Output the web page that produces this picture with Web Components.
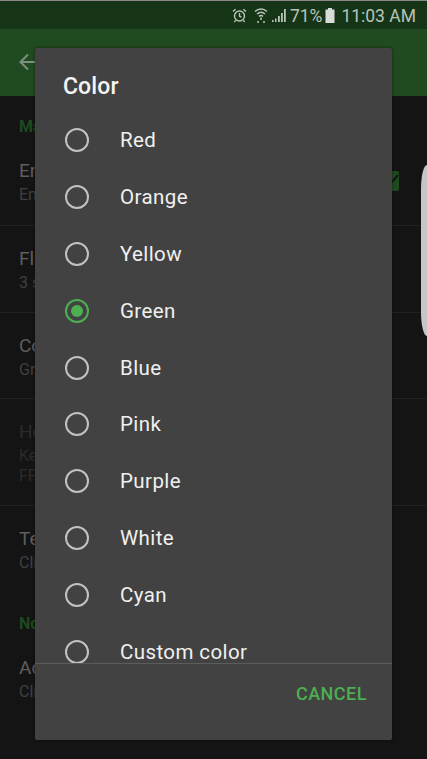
<!DOCTYPE html>
<html>
<head>
<meta charset="utf-8">
<style>
  html, body { margin: 0; height: 100%; background: #141414; }
  body { font-family: Roboto, sans-serif; overflow: hidden; position: relative; }
</style>
</head>
<body>
<settings-screen></settings-screen>
<edge-handle></edge-handle>
<color-dialog selected="Green"></color-dialog>

<script>
class StatusBar extends HTMLElement {
  constructor() {
    super();
    this.attachShadow({ mode: 'open' }).innerHTML = `
      <style>
        :host {
          display: flex;
          align-items: center;
          justify-content: flex-end;
          box-sizing: border-box;
          height: 29px;
          padding: 1px 11px 0 0;
          background: #163516;
          border-top: 1px solid #8a8a8a;
          color: #b9c4b9;
          font-size: 17.5px;
        }
        svg { display: block; flex: none; }
        .alarm { margin-right: 7px; }
        .wifi { margin-right: 3px; }
        .pct { margin: 0 3px 0 4px; }
        .time { margin-left: 6px; }
      </style>
      <svg class="alarm" width="15" height="15" viewBox="0 0 15 15" fill="none" stroke="#b9c4b9" stroke-width="1.4">
        <circle cx="7.5" cy="8" r="5"/><path d="M7.5 5v3.2l2 1M1 3.6 3.6 1.2M14 3.6 11.4 1.2M3.6 12.4 2.4 14M11.4 12.4 12.6 14"/>
      </svg>
      <svg class="wifi" width="14" height="17" viewBox="0 0 14 17" fill="none" stroke="#b9c4b9" stroke-width="1.5">
        <path d="M1 4.5C4.5 1.2 9.5 1.2 13 4.5M3 7C5.400 4.800 8.600 4.800 11 7M5 9.300C6.200 8.300 7.800 8.300 9 9.300"/>
        <path d="M7 10.500V13" /><circle cx="4" cy="15" r="1" fill="#b9c4b9" stroke="none"/><circle cx="10" cy="15" r="1" fill="#b9c4b9" stroke="none"/>
      </svg>
      <svg width="15" height="15" viewBox="0 0 15 15" fill="#b9c4b9">
        <path d="M1 12h1.500v2H1zM4 10.500h1.500V14H4zM7 8h1.800v6H7zM10 5h1.800v9H10zM13 1h1.800v13H13z"/>
      </svg>
      <span class="pct">71%</span>
      <svg width="10" height="15" viewBox="0 0 10 15" fill="#d8dcd8">
        <path d="M3 0h4v1.500h2.500V15H.5V1.500H3z"/>
      </svg>
      <span class="time">11:03 AM</span>`;
  }
}

class AppBar extends HTMLElement {
  constructor() {
    super();
    this.attachShadow({ mode: 'open' }).innerHTML = `
      <style>
        :host {
          display: flex;
          align-items: center;
          box-sizing: border-box;
          height: 67px;
          padding: 0 0 2px 19px;
          background: #204a20;
        }
        svg { display: block; }
      </style>
      <svg width="18" height="18" viewBox="0 0 18 18" fill="none" stroke="#7e8f7e" stroke-width="2">
        <path d="M18 9H2M9 1.500 1.500 9 9 16.500"/>
      </svg>`;
  }
}

class SectionLabel extends HTMLElement {
  constructor() {
    super();
    this.attachShadow({ mode: 'open' }).innerHTML = `
      <style>
        :host {
          display: block;
          padding: 21px 19px 1px;
          color: #1c4a1e;
          font-size: 16px;
          font-weight: 700;
          line-height: 20px;
        }
      </style>
      <slot></slot>`;
  }
}

class SettingRow extends HTMLElement {
  constructor() {
    super();
    this.attachShadow({ mode: 'open' }).innerHTML = `
      <style>
        :host {
          display: block;
          box-sizing: border-box;
          padding: 21px 19px 0;
          height: var(--row-height, 86.500px);
          border-bottom: 1px solid #212121;
          color: #5e5e5e;
          font-size: 19px;
          line-height: 24px;
        }
        :host([last]) { border-bottom: 0; }
        :host([dim]) { color: #2b2b2b; }
        .sub { color: #404040; font-size: 16px; line-height: 20px; margin-top: 2px; }
        :host([dim]) .sub { color: #2b2b2b; }
      </style>
      <div><slot></slot></div>
      <div class="sub"><slot name="sub"></slot></div>`;
  }
}

class SettingsScreen extends HTMLElement {
  constructor() {
    super();
    this.attachShadow({ mode: 'open' }).innerHTML = `
      <style>
        :host { display: block; background: #141414; }
        .check {
          position: absolute; left: 385px; top: 171px;
          width: 14px; height: 20px; border-radius: 2px;
          background: #1f4a20;
        }
        .check svg { display: block; }
      </style>
      <status-bar></status-bar>
      <app-bar></app-bar>
      <section-label>Main</section-label>
      <setting-row style="--row-height:88px">Enabled<span slot="sub">Enable</span></setting-row>
      <setting-row>Flash rate<span slot="sub">3 seconds</span></setting-row>
      <setting-row>Color<span slot="sub">Green</span></setting-row>
      <setting-row dim style="--row-height:107px">Hex<span slot="sub">Keep<br>FF00</span></setting-row>
      <setting-row last style="--row-height:87px">Test<span slot="sub">Click</span></setting-row>
      <section-label>Notifications</section-label>
      <setting-row last>Add<span slot="sub">Click</span></setting-row>
      <div class="check">
        <svg width="14" height="20" viewBox="0 0 14 20" fill="none" stroke="#141414" stroke-width="2"><path d="M7 11l6-7"/></svg>
      </div>`;
  }
}

class EdgeHandle extends HTMLElement {
  constructor() {
    super();
    this.attachShadow({ mode: 'open' }).innerHTML = `
      <style>
        :host {
          position: absolute;
          right: 0; top: 165px;
          width: 6px; height: 171px;
          background: #c6c6c6;
          border-radius: 6px 0 0 6px / 24px 0 0 24px;
        }
      </style>`;
  }
}

class ColorOption extends HTMLElement {
  constructor() {
    super();
    this.attachShadow({ mode: 'open' }).innerHTML = `
      <style>
        :host {
          display: flex;
          align-items: center;
          flex: none;
          height: 56.900px;
          padding-left: 30px;
          color: #f0f0f0;
          font-size: 20.500px;
          letter-spacing: .4px;
        }
        .radio {
          box-sizing: border-box;
          flex: none;
          width: 24px; height: 24px;
          margin-right: 31px;
          border: 2.500px solid #c2c2c2;
          border-radius: 50%;
        }
        :host([checked]) .radio {
          border-color: #4caf50;
          padding: 4px;
        }
        :host([checked]) .radio::before {
          content: '';
          display: block;
          width: 100%; height: 100%;
          border-radius: 50%;
          background: #4caf50;
        }
      </style>
      <span class="radio"></span><slot></slot>`;
  }
}

class ColorDialog extends HTMLElement {
  constructor() {
    super();
    this.attachShadow({ mode: 'open' }).innerHTML = `
      <style>
        :host {
          position: absolute;
          left: 35px; top: 48px;
          width: 357px; height: 692px;
          display: flex;
          flex-direction: column;
          background: #424242;
          border-radius: 2px;
          box-shadow: 0 0 3px rgba(0, 0, 0, .5);
          color: #f4f4f4;
        }
        h2 {
          flex: none;
          box-sizing: border-box;
          height: 63.500px;
          margin: 0;
          padding: 23px 28px 0;
          font-size: 23px;
          font-weight: 500;
          letter-spacing: .1px;
          line-height: 32px;
        }
        .list {
          flex: 1;
          min-height: 0;
          display: flex;
          flex-direction: column;
          overflow: hidden;
        }
        .footer {
          flex: none;
          display: flex;
          justify-content: flex-end;
          box-sizing: border-box;
          height: 77px;
          padding: 19px 25px 0 0;
          border-top: 1px solid #5c5c5c;
        }
        .cancel {
          color: #4caf50;
          font-size: 18px;
          font-weight: 500;
          letter-spacing: .5px;
          line-height: 22px;
        }
      </style>
      <h2>Color</h2>
      <div class="list"></div>
      <div class="footer"><span class="cancel">CANCEL</span></div>`;

    const list = this.shadowRoot.querySelector('.list');
    const colors = ['Red', 'Orange', 'Yellow', 'Green', 'Blue', 'Pink', 'Purple', 'White', 'Cyan', 'Custom color'];
    for (const name of colors) {
      const option = document.createElement('color-option');
      option.textContent = name;
      if (name === this.getAttribute('selected')) option.setAttribute('checked', '');
      list.appendChild(option);
    }
  }
}

customElements.define('status-bar', StatusBar);
customElements.define('app-bar', AppBar);
customElements.define('section-label', SectionLabel);
customElements.define('setting-row', SettingRow);
customElements.define('settings-screen', SettingsScreen);
customElements.define('edge-handle', EdgeHandle);
customElements.define('color-option', ColorOption);
customElements.define('color-dialog', ColorDialog);
</script>
</body>
</html>
